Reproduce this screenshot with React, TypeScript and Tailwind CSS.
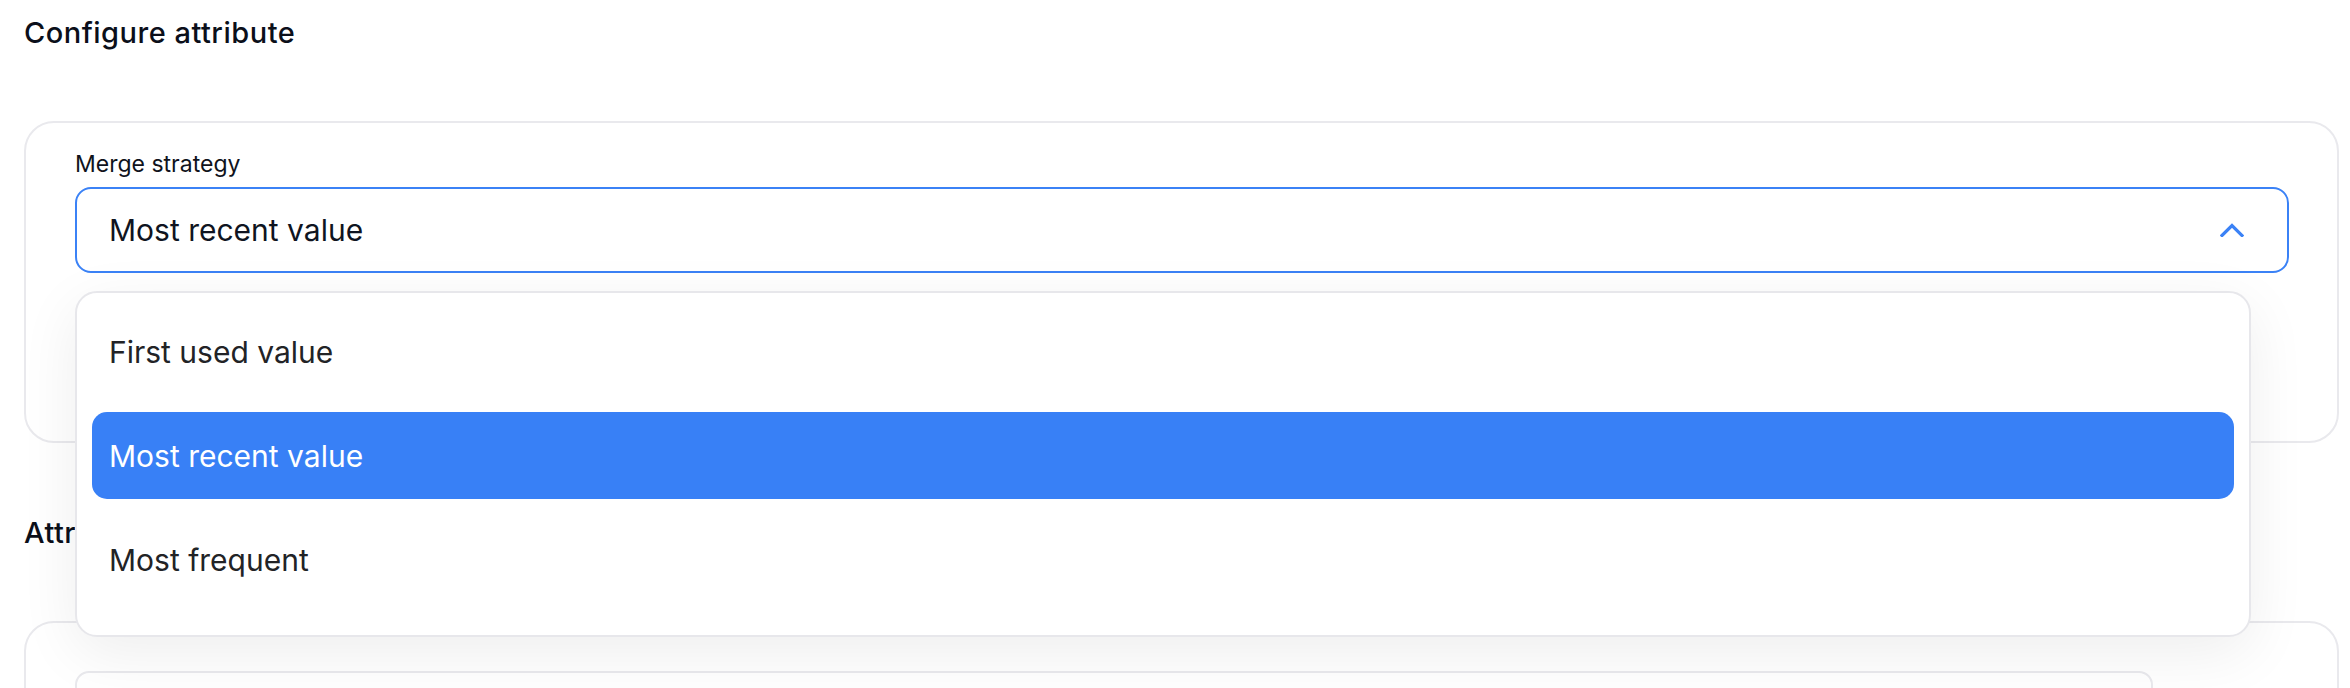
import React from "react";

function ChevronUp() {
  return (
    <svg width="24" height="14" viewBox="0 0 24 14" fill="none" className="block">
      <path d="M2 12.5 L12 2.5 L22 12.5" stroke="#3b82f6" strokeWidth="3.2" strokeLinecap="square" strokeLinejoin="miter" />
    </svg>
  );
}

const options = ["First used value", "Most recent value", "Most frequent"];

export default function App() {
  const selected = "Most recent value";
  return (
    <div className="min-h-[688px] w-[2350px] overflow-hidden bg-white font-['Inter',sans-serif] text-[#0b0f1a]">
      <div className="ml-[24px] w-[2315px] pt-[13px]">
        <h2 className="text-[29px] leading-[40px] font-medium tracking-[0.5px]">Configure attribute</h2>

        <div className="mt-[68px] h-[322px] rounded-[30px] border-2 border-[#e9e9ed] bg-white pl-[49px] pr-[48px] pt-[26px]">
          <label className="block text-[23px] leading-[30px] text-[#10131c]">Merge strategy</label>
          <div className="relative mt-[8px]">
            <button
              type="button"
              className="flex h-[86px] w-full items-center justify-between rounded-[16px] border-2 border-[#3b82f6] bg-white pl-[32px] pr-[43px] text-left"
            >
              <span className="text-[30px] leading-[36px] text-[#0f1421]">{selected}</span>
              <ChevronUp />
            </button>

            <div className="absolute left-0 top-[104px] z-10 w-[2176px] rounded-[22px] border-2 border-[#e7e7eb] bg-white px-[15px] pt-[15px] pb-[32px] shadow-[0_16px_60px_rgba(0,0,0,0.07)]">
              <ul className="flex flex-col gap-[17px]">
                {options.map((o) => {
                  const active = o === selected;
                  return (
                    <li
                      key={o}
                      className={
                        active
                          ? "flex h-[87px] items-center rounded-[15px] bg-[#3880f6] pl-[17px] text-[30px] leading-[36px] text-white"
                          : "flex h-[87px] items-center rounded-[15px] pl-[17px] text-[30px] leading-[36px] text-[#222326]"
                      }
                    >
                      {o}
                    </li>
                  );
                })}
              </ul>
            </div>
          </div>
        </div>

        <h2 className="mt-[70px] text-[29px] leading-[40px] font-medium tracking-[0.5px]">Attributes</h2>

        <div className="mt-[68px] h-[200px] rounded-[30px] border-2 border-[#e9e9ed] bg-white pl-[49px] pr-[48px] pt-[48px]">
          <div className="h-[100px] w-[2078px] rounded-[14px] border-2 border-[#e9e9ed] bg-white" />
        </div>
      </div>
    </div>
  );
}
